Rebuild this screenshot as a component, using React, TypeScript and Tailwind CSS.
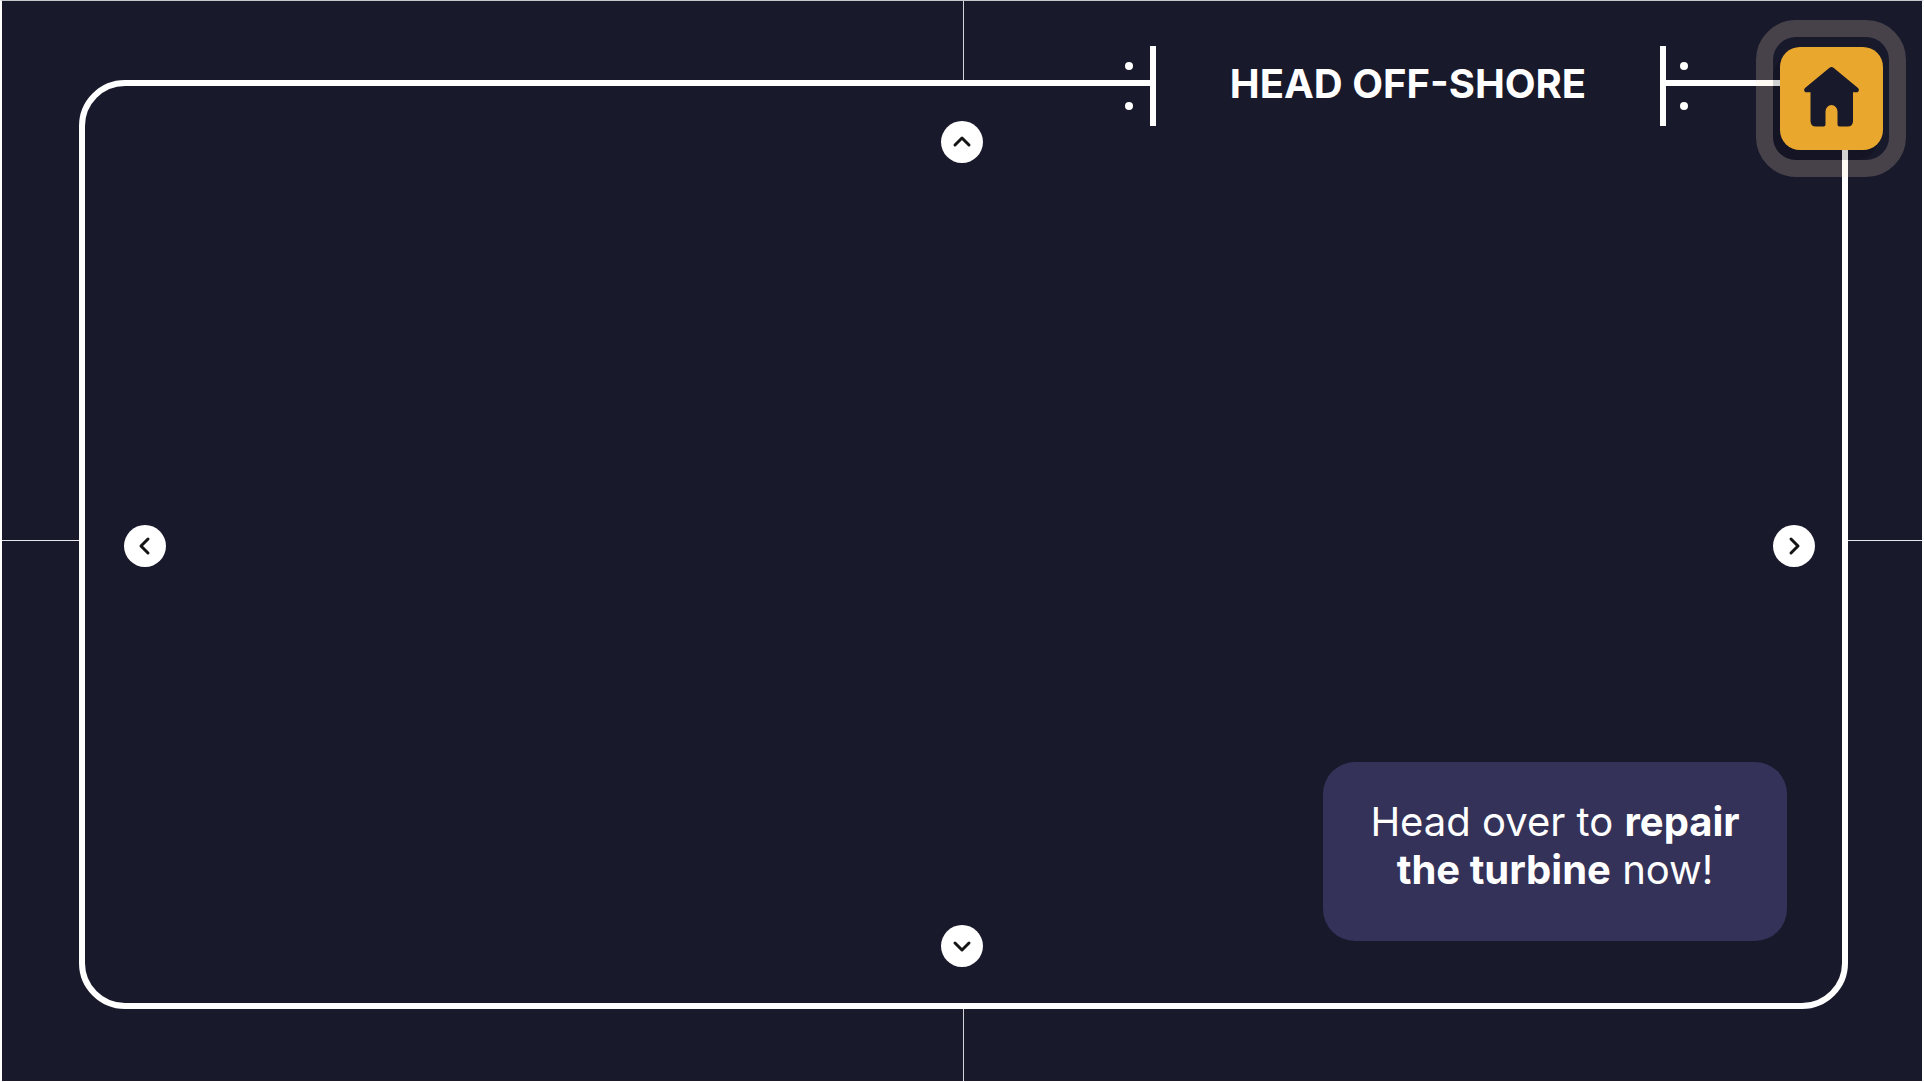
import type { ReactNode } from "react";

function ArrowButton({ label, path }: { label: string; path: string }) {
  return (
    <button
      type="button"
      aria-label={label}
      className="flex size-[42px] items-center justify-center rounded-full bg-white text-[#151515]"
    >
      <svg viewBox="0 0 42 42" className="size-full" fill="none" stroke="currentColor" strokeWidth="3" strokeLinecap="round" strokeLinejoin="round">
        <path d={path} />
      </svg>
    </button>
  );
}

function Dots() {
  return (
    <div className="flex flex-col gap-8">
      <span className="size-2 rounded-full bg-white" />
      <span className="size-2 rounded-full bg-white" />
    </div>
  );
}

function TitlePlate({ children }: { children: ReactNode }) {
  return (
    <header className="col-span-full col-start-1 row-span-full row-start-1 mt-[45px] mr-[234px] flex h-20 items-center gap-x-[14px] self-start justify-self-end">
      <Dots />
      <div className="ml-[3px] flex h-full w-[516px] items-center justify-center border-x-[6px] border-white bg-[#19192c] pb-1">
        <h1 className="whitespace-nowrap text-[40px] leading-[48px] font-bold">{children}</h1>
      </div>
      <Dots />
    </header>
  );
}

function HomeButton() {
  return (
    <div className="col-span-full col-start-1 row-span-full row-start-1 mt-[19px] mr-4 flex h-[157px] w-[150px] justify-center self-start overflow-hidden justify-self-end rounded-[40px] border-[17px] border-[rgba(255,231,196,0.2)] pt-[10px]">
      <button
        type="button"
        aria-label="Home"
        className="flex size-[103px] shrink-0 items-center justify-center rounded-[20px] bg-[#e9a72e] pb-1 text-[#19192c] shadow-[-6px_9px_0_1px_rgba(0,0,0,0.18)]"
      >
        <svg viewBox="0 0 55 60" className="h-[60px] w-[55px]" fill="currentColor">
          <path d="M25.5.8Q27.5-.6 29.5.8L54 21Q56 23.5 53.5 25.2H49V54Q49 59.5 43.5 59.5H35.5Q33.5 59.5 33.5 57.5V44.5A6 6.5 0 0 0 21.5 44.5V57.5Q21.5 59.5 19.5 59.5H12Q6.5 59.5 6.5 54V25.2H1.5Q-1 23.5 1 21Z" />
        </svg>
      </button>
    </div>
  );
}

export default function App() {
  return (
    <div className="grid min-h-screen grid-cols-[77px_1fr_74px] grid-rows-[79px_1fr_72px] border-x-2 border-y border-x-white border-t-[#c3c8ca] border-b-white bg-[#19192c] font-['Inter',sans-serif] text-white">
      <div className="col-span-full row-start-1 ml-[2px] w-px justify-self-center bg-[#d5d5d9]" />
      <div className="col-start-1 row-start-2 mb-2 h-px self-center bg-[#e8e8ea]" />
      <div className="col-start-3 row-start-2 mb-2 h-px self-center bg-[#e8e8ea]" />
      <div className="col-span-full row-start-3 ml-[2px] w-px justify-self-center bg-[#d5d5d9]" />

      <main className="col-start-2 row-start-2 grid grid-rows-[42px_1fr_42px] rounded-[46px] border-[6px] border-white pt-[35px] pb-9">
        <div className="col-start-1 row-start-1 flex justify-center pr-[3px]">
          <ArrowButton label="Look up" path="M14 24 21 17l7 7" />
        </div>
        <div className="col-start-1 row-start-2 flex items-center justify-between pt-[3px] pr-[27px] pl-[39px]">
          <ArrowButton label="Look left" path="M24 14 17 21l7 7" />
          <ArrowButton label="Look right" path="M18 14 25 21l-7 7" />
        </div>
        <div className="col-start-1 row-start-3 flex justify-center pr-[3px]">
          <ArrowButton label="Look down" path="M14 18 21 25l7-7" />
        </div>
        <p className="col-start-1 row-span-full row-start-1 mr-[55px] mb-[26px] w-[464px] self-end justify-self-end rounded-[32px] bg-[#343259] px-4 pt-9 pb-[47px] text-center text-[40px] leading-[48px]">
          Head over to <strong className="font-bold">repair</strong>
          <br />
          <strong className="font-bold">the turbine</strong> now!
        </p>
      </main>

      <TitlePlate>HEAD OFF-SHORE</TitlePlate>
      <HomeButton />
    </div>
  );
}
